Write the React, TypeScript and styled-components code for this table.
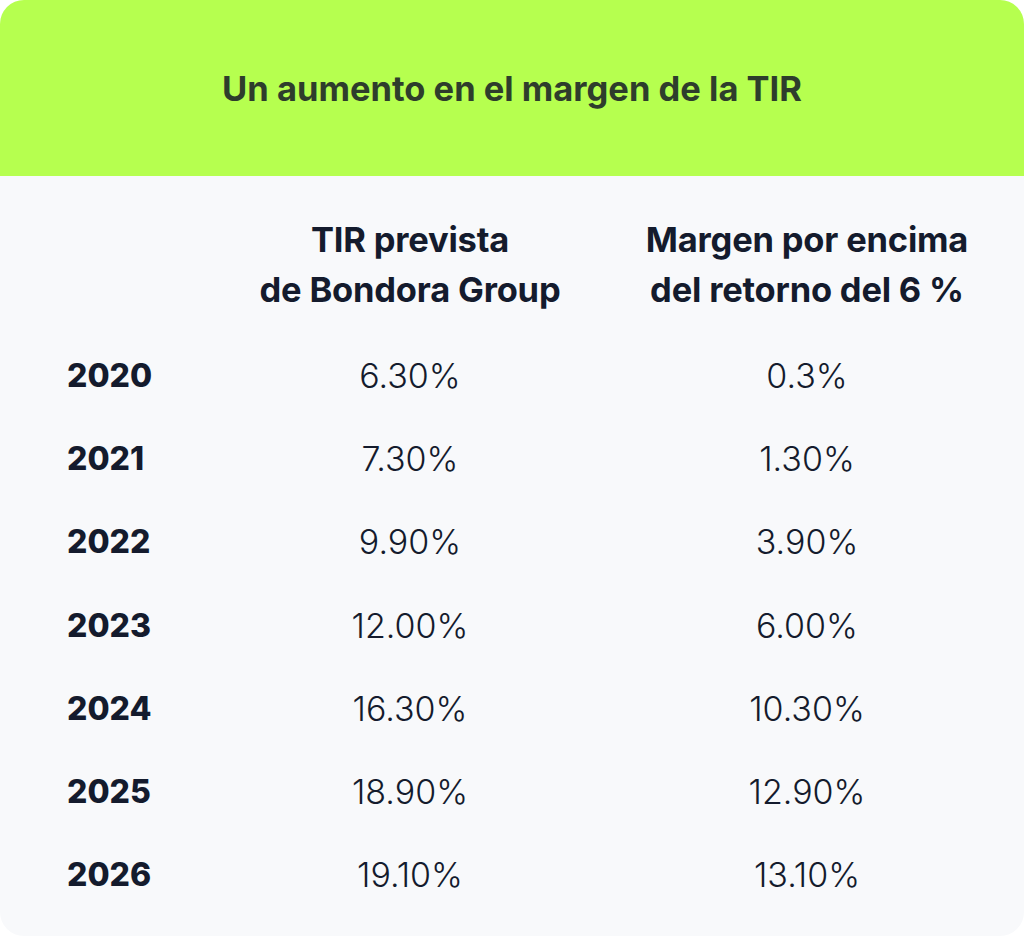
import styled, { createGlobalStyle } from 'styled-components'

const rows = [
  { year: '2020', irr: '6.30%', margin: '0.3%' },
  { year: '2021', irr: '7.30%', margin: '1.30%' },
  { year: '2022', irr: '9.90%', margin: '3.90%' },
  { year: '2023', irr: '12.00%', margin: '6.00%' },
  { year: '2024', irr: '16.30%', margin: '10.30%' },
  { year: '2025', irr: '18.90%', margin: '12.90%' },
  { year: '2026', irr: '19.10%', margin: '13.10%' },
]

const GlobalStyle = createGlobalStyle`
  html, body {
    margin: 0;
    padding: 0;
    background: #ffffff;
  }
  body {
    font-family: Inter, 'Noto Sans', sans-serif;
    -webkit-font-smoothing: antialiased;
  }
`

export default function App() {
  return (
    <>
      <GlobalStyle />
      <Card>
        <Banner>
          <Title>Un aumento en el margen de la TIR</Title>
        </Banner>
        <Table>
          <HeadRow>
            <span />
            <HeadCell>
              TIR prevista
              <br />
              de Bondora Group
            </HeadCell>
            <HeadCell>
              Margen por encima
              <br />
              del retorno del 6 %
            </HeadCell>
          </HeadRow>
          {rows.map((r) => (
            <Row key={r.year}>
              <Year>{r.year}</Year>
              <Value>{r.irr}</Value>
              <Value>{r.margin}</Value>
            </Row>
          ))}
        </Table>
      </Card>
    </>
  )
}

const Card = styled.div`
  width: 1024px;
  height: 936px;
  background: #f8f9fb;
  border-radius: 24px;
  overflow: hidden;
  display: flex;
  flex-direction: column;
`

const Banner = styled.header`
  height: 176px;
  background: #b6ff4f;
  display: flex;
  align-items: center;
  justify-content: center;
`

const Title = styled.h1`
  margin: 0;
  font-size: 34.5px;
  font-weight: 700;
  color: #2e3d2c;
`

const Table = styled.div`
  padding: 39px 10px 0 67px;
  display: flex;
  flex-direction: column;
  color: #141b2d;
`

const Grid = styled.div`
  display: grid;
  grid-template-columns: 153px 306px 414px;
  column-gap: 37px;
  align-items: center;
`

const HeadRow = styled(Grid)`
  margin-bottom: 19px;
`

const HeadCell = styled.div`
  text-align: center;
  font-size: 34.5px;
  line-height: 50px;
  font-weight: 700;
  letter-spacing: -0.2px;
  white-space: nowrap;
`

const Row = styled(Grid)`
  height: 83.2px;
`

const Year = styled.div`
  font-size: 32px;
  font-weight: 800;
`

const Value = styled.div`
  text-align: center;
  font-size: 34px;
  font-weight: 350;
`
